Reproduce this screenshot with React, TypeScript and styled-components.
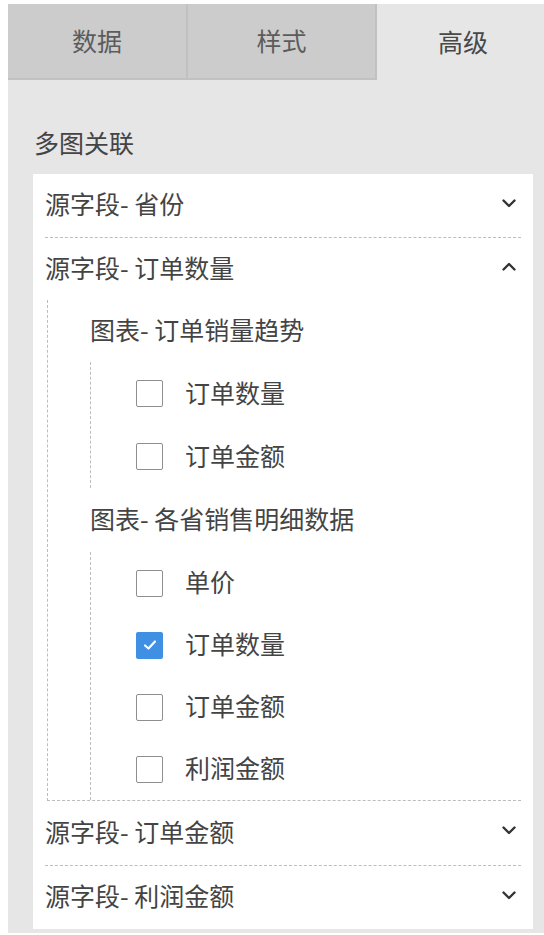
import React from "react";
import styled, { createGlobalStyle } from "styled-components";

const GlobalStyle = createGlobalStyle`
  html, body {
    margin: 0;
    padding: 0;
    background: #ffffff;
  }
  body {
    font-family: "Noto Sans CJK SC", "Noto Sans", sans-serif;
    color: #444444;
  }
`;

const Panel = styled.div`
  margin: 4px 0 0 8px;
  width: 536px;
  height: 929px;
  background: #e6e6e6;
  overflow: hidden;
`;

const Tabs = styled.div`
  display: flex;
  height: 76px;
`;

const Tab = styled.div<{ $active?: boolean; $w: number }>`
  flex: 0 0 ${(p) => p.$w}px;
  display: flex;
  align-items: center;
  justify-content: center;
  padding-bottom: 3px;
  font-size: 25px;
  color: ${(p) => (p.$active ? "#484848" : "#5c5c5c")};
  background: ${(p) => (p.$active ? "transparent" : "#cccccc")};
  border-right: ${(p) => (p.$active ? "none" : "2px solid #c1c1c1")};
  border-bottom: ${(p) => (p.$active ? "none" : "2px solid #c1c1c1")};
  box-sizing: border-box;
`;

const Title = styled.div`
  padding: 47px 0 17px 26px;
  font-size: 25px;
  line-height: 30px;
  color: #444444;
`;

const Card = styled.div`
  margin-left: 25px;
  width: 500px;
  background: #ffffff;
  padding: 0 12px;
  box-sizing: border-box;
`;

const Header = styled.div<{ $h: number; $line?: boolean }>`
  display: flex;
  align-items: center;
  justify-content: space-between;
  box-sizing: border-box;
  height: ${(p) => p.$h}px;
  padding-bottom: 5px;
  font-size: 25px;
  color: #444444;
  border-bottom: ${(p) => (p.$line ? "1px dashed #bdbdbd" : "none")};
`;

const Chevron = styled.svg`
  width: 14px;
  height: 9px;
  margin-right: 5px;
`;

const Body = styled.div`
  margin-left: 2px;
  border-left: 1px dashed #bdbdbd;
  border-bottom: 1px dashed #bdbdbd;
  padding-left: 42px;
`;

const ChartTitle = styled.div<{ $h: number }>`
  height: ${(p) => p.$h}px;
  box-sizing: border-box;
  padding-bottom: 5px;
  display: flex;
  align-items: center;
  font-size: 25px;
  color: #444444;
`;

const List = styled.div`
  border-left: 1px dashed #bdbdbd;
  padding-left: 45px;
`;

const Item = styled.label<{ $h: number }>`
  display: flex;
  align-items: center;
  gap: 22px;
  height: ${(p) => p.$h}px;
  font-size: 25px;
  color: #444444;
`;

const Text = styled.span`
  position: relative;
  top: -2px;
`;

const Box = styled.span<{ $checked?: boolean }>`
  width: 27px;
  height: 27px;
  box-sizing: border-box;
  border-radius: 2px;
  border: ${(p) => (p.$checked ? "none" : "1.5px solid #8e8e8e")};
  background: ${(p) => (p.$checked ? "#3f8fe3" : "#ffffff")};
  display: flex;
  align-items: center;
  justify-content: center;
`;

function Arrow({ up }: { up?: boolean }) {
  return (
    <Chevron viewBox="0 0 14 9">
      <path
        d={up ? "M1.5 7.5 L7 2 L12.5 7.5" : "M1.5 1.5 L7 7 L12.5 1.5"}
        fill="none"
        stroke="#333"
        strokeWidth="2.4"
        strokeLinecap="round"
        strokeLinejoin="round"
      />
    </Chevron>
  );
}

function Check({ label, checked, h }: { label: string; checked?: boolean; h: number }) {
  return (
    <Item $h={h}>
      <Box $checked={checked}>
        {checked && (
          <svg width="14" height="12" viewBox="0 0 14 12">
            <path d="M2 6.5 L5.5 9.5 L12 2.5" fill="none" stroke="#fff" strokeWidth="2.2" strokeLinecap="round" strokeLinejoin="round" />
          </svg>
        )}
      </Box>
      <Text>{label}</Text>
    </Item>
  );
}

export default function App() {
  return (
    <>
      <GlobalStyle />
      <Panel>
        <Tabs>
          <Tab $w={180}>数据</Tab>
          <Tab $w={189}>样式</Tab>
          <Tab $w={172} $active>
            高级
          </Tab>
        </Tabs>
        <Title>多图关联</Title>
        <Card>
          <Header $h={64} $line>
            源字段- 省份
            <Arrow />
          </Header>
          <Header $h={62}>
            源字段- 订单数量
            <Arrow up />
          </Header>
          <Body>
            <ChartTitle $h={62}>图表- 订单销量趋势</ChartTitle>
            <List>
              <Check h={63} label="订单数量" />
              <Check h={63} label="订单金额" />
            </List>
            <ChartTitle $h={64}>图表- 各省销售明细数据</ChartTitle>
            <List>
              <Check h={62} label="单价" />
              <Check h={62} label="订单数量" checked />
              <Check h={62} label="订单金额" />
              <Check h={62} label="利润金额" />
            </List>
          </Body>
          <Header $h={65} $line>
            源字段- 订单金额
            <Arrow />
          </Header>
          <Header $h={63}>
            源字段- 利润金额
            <Arrow />
          </Header>
        </Card>
      </Panel>
    </>
  );
}
